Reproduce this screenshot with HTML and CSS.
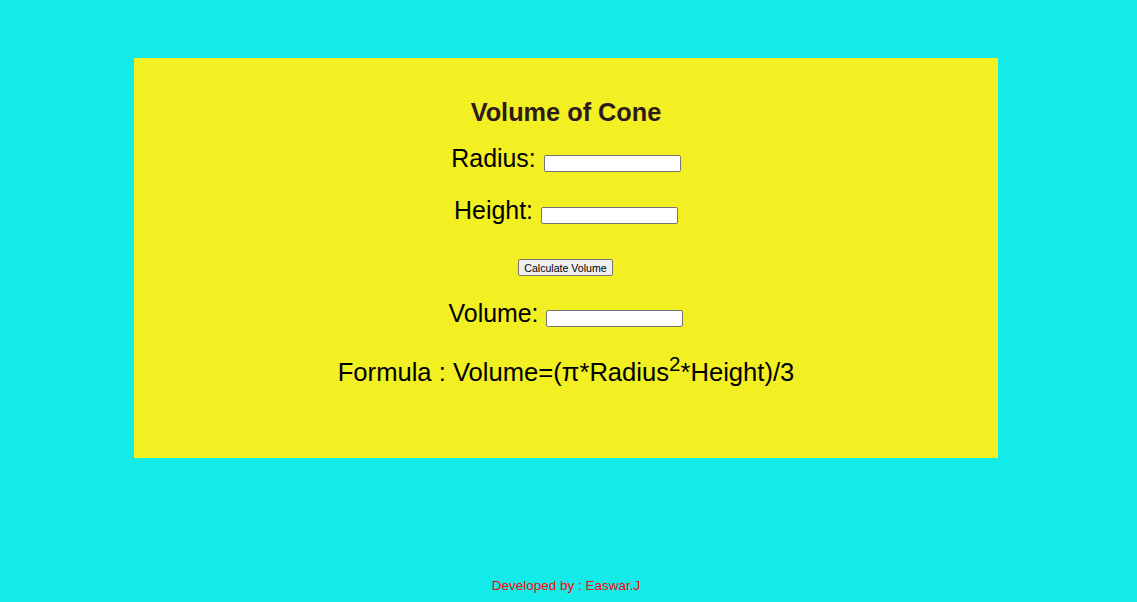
FILE: index.html
```html
<!DOCTYPE html>
<html lang="en">
<head>
<meta charset="utf-8">
<title>Volume of Cone</title>
<link rel="stylesheet" href="styles.css">
</head>
<body>
<main class="card">
  <h2 class="title">Volume of Cone</h2>
  <div class="row"><label for="r">Radius:</label> <input id="r" class="field" type="text"></div>
  <div class="row"><label for="h">Height:</label> <input id="h" class="field" type="text"></div>
  <div class="row btn-row"><button class="btn" type="button">Calculate Volume</button></div>
  <div class="row"><label for="v">Volume:</label> <input id="v" class="field" type="text"></div>
  <div class="row formula">Formula : Volume=(π*Radius<sup>2</sup>*Height)/3</div>
</main>
<footer class="footer">Developed by : Easwar.J</footer>
</body>
</html>
```
FILE: styles.css
```css
html, body {
  margin: 0;
  padding: 0;
}
body {
  background: #13ebe9;
  font-family: "Liberation Sans", Arial, sans-serif;
  color: #000;
  width: 1137px;
  height: 602px;
  overflow: hidden;
}
.card {
  margin: 58px 0 0 134px;
  width: 864px;
  height: 400px;
  box-sizing: border-box;
  background: #f2ef22;
  padding-top: 39px;
  text-align: center;
}
.title {
  margin: 0 0 16px;
  font-size: 25.3px;
  line-height: 30px;
  font-weight: bold;
  color: #2e1a1a;
}
.row {
  font-size: 24.9px;
  line-height: 30px;
  margin-bottom: 22px;
}
.field {
  box-sizing: border-box;
  width: 137px;
  height: 17px;
  padding: 0 2px;
  border: 1px solid #767676;
  border-radius: 2px;
  background: #fff;
  font-size: 11px;
  vertical-align: text-bottom;
  margin: 0 0 0 1px;
}
.btn-row {
  line-height: 17px;
  height: 17px;
  margin-top: 34px;
  margin-bottom: 22px;
}
.btn {
  box-sizing: border-box;
  width: 95px;
  height: 17px;
  padding: 0;
  margin: 0 1px 0 0;
  border: 1px solid #767676;
  border-radius: 2px;
  background: #efefef;
  color: #000;
  font-family: "Liberation Sans", Arial, sans-serif;
  font-size: 10.6px;
  vertical-align: top;
}
.formula {
  font-size: 25.6px;
  margin-top: 29px;
}
.formula sup {
  font-size: 0.8em;
  line-height: 0;
}
.footer {
  margin: 120px 0 0 134px;
  width: 864px;
  text-align: center;
  color: #ff0000;
  font-size: 13.5px;
  line-height: 16px;
}
```
